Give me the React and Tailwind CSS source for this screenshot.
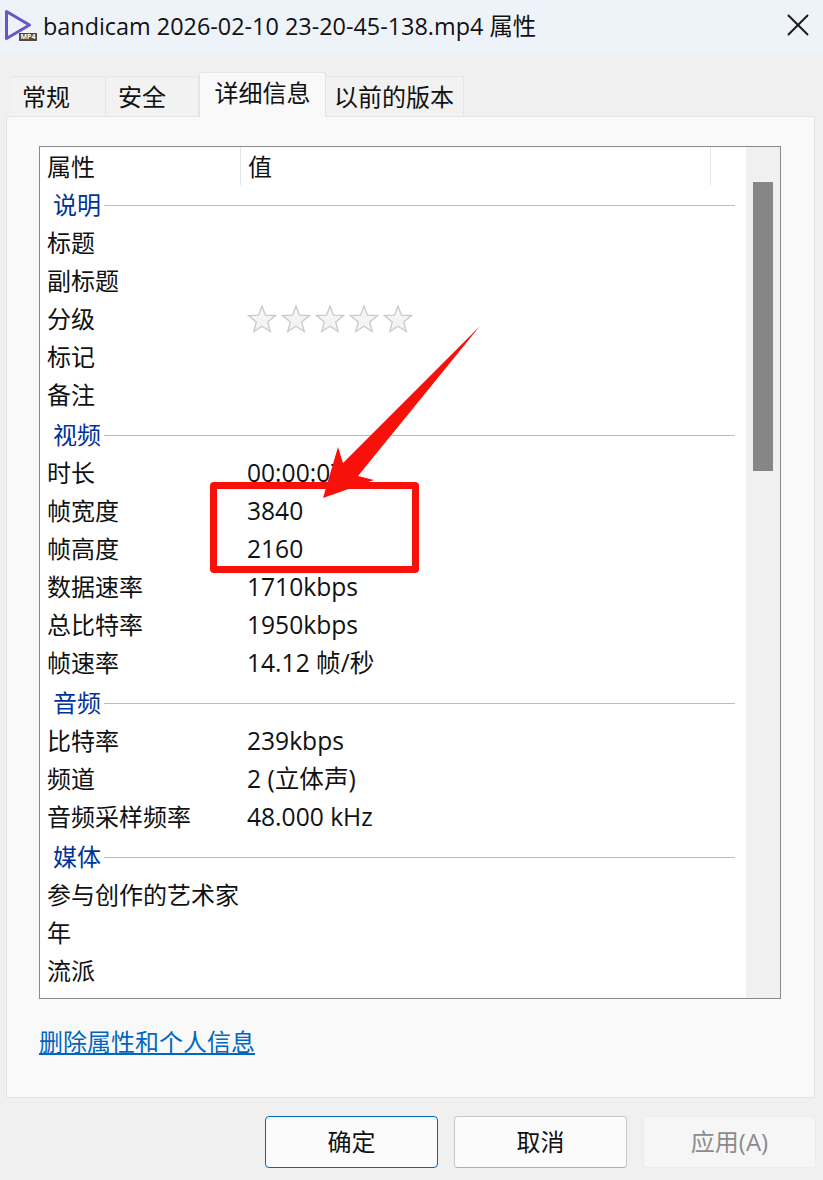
import { X } from 'lucide-react';

const font = { fontFamily: '"Open Sans", "Noto Sans CJK SC", sans-serif' };

const rows = [
  { group: '说明' },
  { name: '标题' },
  { name: '副标题' },
  { name: '分级', stars: true },
  { name: '标记' },
  { name: '备注' },
  { group: '视频' },
  { name: '时长', value: '00:00:07' },
  { name: '帧宽度', value: '3840' },
  { name: '帧高度', value: '2160' },
  { name: '数据速率', value: '1710kbps' },
  { name: '总比特率', value: '1950kbps' },
  { name: '帧速率', value: '14.12 帧/秒' },
  { group: '音频' },
  { name: '比特率', value: '239kbps' },
  { name: '频道', value: '2 (立体声)' },
  { name: '音频采样频率', value: '48.000 kHz' },
  { group: '媒体' },
  { name: '参与创作的艺术家' },
  { name: '年' },
  { name: '流派' },
];

const tabs = [
  { label: '常规', w: 'w-[96px]', pad: 'pl-[12px]' },
  { label: '安全', w: 'w-[93px]', pad: 'pl-[12px]' },
  { label: '详细信息', w: 'w-[127px]', active: true },
  { label: '以前的版本', w: 'w-[138px]', pad: 'pl-[8px]' },
];

function FileIcon() {
  return (
    <div className="relative w-[34px] h-[34px] shrink-0">
      <svg width="30" height="34" viewBox="0 0 30 34" fill="none">
        <path d="M2.5 1.5 L25.5 15 L2.5 28.5 Z" stroke="#6a55c8" strokeWidth="3" strokeLinejoin="round" />
      </svg>
      <span className="absolute right-[1px] bottom-[3px] w-[18px] h-[8px] bg-[#4a4a4a] text-white text-[7px] leading-[8px] text-center font-bold">
        MP4
      </span>
    </div>
  );
}

function Stars() {
  return (
    <div className="flex gap-[4px]">
      {[0, 1, 2, 3, 4].map((i) => (
        <svg key={i} width="30" height="30" viewBox="0 0 30 30">
          <path
            d="M15 2 L18.5 11.2 L28.5 11.6 L20.7 17.9 L23.3 27.6 L15 22.2 L6.7 27.6 L9.3 17.9 L1.5 11.6 L11.5 11.2 Z"
            fill="#f4f4f4"
            stroke="#c9c9c9"
            strokeWidth="1.3"
          />
        </svg>
      ))}
    </div>
  );
}

function Row({ row }) {
  if (row.group) {
    return (
      <div className="h-[38px] mt-[2px] flex items-center pl-[13px] pr-[11px]">
        <span className="text-[#003399] mr-[3px]">{row.group}</span>
        <div className="flex-1 h-px bg-[#b0bfd6]" />
      </div>
    );
  }
  return (
    <div className="h-[38px] flex items-center">
      <div className="w-[200px] pl-[7px] whitespace-nowrap">{row.name}</div>
      <div className="pl-[7px] whitespace-nowrap text-[24.6px]">{row.stars ? <Stars /> : row.value}</div>
    </div>
  );
}

export default function App() {
  return (
    <div className="relative w-[823px] h-[1180px] overflow-hidden bg-[#f0f0f0] text-[24px] text-[#111]" style={font}>
      <div className="h-[54px] bg-[#eef2f9] flex items-center pl-[4px] pr-[6px]">
        <FileIcon />
        <div className="ml-[5px] flex-1 whitespace-nowrap text-[23.4px]">bandicam 2026-02-10 23-20-45-138.mp4 属性</div>
        <X size={38} strokeWidth={1.2} className="text-[#1a1a1a] mt-[-4px]" />
      </div>

      <div className="h-[62px] pl-[10px] flex items-end relative z-10">
        {tabs.map((tab) => (
          <div
            key={tab.label}
            className={
              tab.active
                ? `${tab.w} h-[45px] bg-[#f9f9f9] border-x border-t border-[#e4e4e4] rounded-t-[3px] flex items-center justify-center pb-[4px] mb-[-1px]`
                : `${tab.w} ${tab.pad} h-[40px] bg-[#f2f2f2] border-r border-t border-[#e6e6e6] rounded-t-[3px] flex items-center`
            }
          >
            {tab.label}
          </div>
        ))}
      </div>

      <div className="ml-[6px] mr-[8px] h-[982px] bg-[#f9f9f9] border border-[#e4e4e4] pl-[32px] pr-[33px] pt-[29px]">
        <div className="h-[853px] border border-[#8a8a8a] bg-white flex overflow-hidden">
          <div className="flex-1 min-w-0">
            <div className="h-[39px] mb-[-2px] pb-px flex items-center">
              <div className="w-[201px] h-full border-r border-[#e5e5e5] pl-[7px] pt-[2px] flex items-center">属性</div>
              <div className="w-[470px] h-full border-r border-[#e5e5e5] pl-[7px] pt-[2px] flex items-center">值</div>
            </div>
            {rows.map((row) => (
              <Row key={row.group || row.name} row={row} />
            ))}
          </div>
          <div className="w-[34px] bg-[#f0f0f0] pt-[35px] px-[7px]">
            <div className="h-[289px] bg-[#868686]" />
          </div>
        </div>
        <a className="block mt-[26px] text-[#0067c0] underline leading-[34px]">删除属性和个人信息</a>
      </div>

      <div className="flex justify-end gap-[16px] pr-[7px] pt-[18px]">
        <button className="w-[173px] h-[52px] rounded-[4px] bg-[#fbfbfb] border border-[#0067c0] text-[#111]">确定</button>
        <button className="w-[173px] h-[52px] rounded-[4px] bg-[#fbfbfb] border border-[#c8c8c8] border-b-[#b0b0b0] text-[#111]">取消</button>
        <button className="w-[173px] h-[52px] rounded-[4px] bg-[#f6f6f6] border border-[#ececec] text-[#8c8c8c]">应用(A)</button>
      </div>

      {/* red annotation on top of the screenshot */}
      <div className="absolute left-[210px] top-[482px] w-[209px] h-[91px] border-[7px] border-[#f8100a] rounded-[4px]" />
      <svg className="absolute left-0 top-0" width="823" height="1180" viewBox="0 0 823 1180" fill="none">
        <path d="M323 498 L338 447 L343 463 L480 326 L358 476 L374 480 Z" fill="#f8100a" />
      </svg>
    </div>
  );
}
